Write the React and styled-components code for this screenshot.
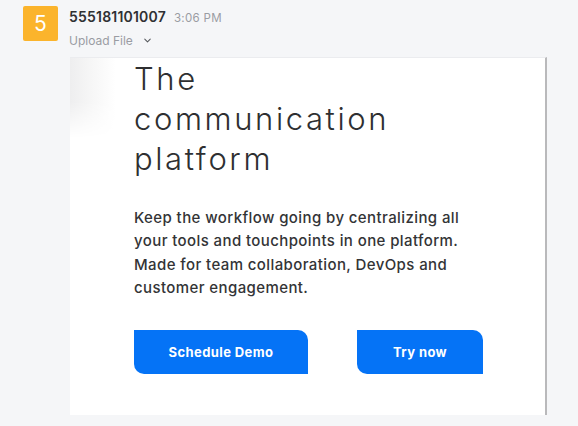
import React from "react";
import styled, { createGlobalStyle } from "styled-components";
import { ChevronDown } from "lucide-react";

const GlobalStyle = createGlobalStyle`
  html, body {
    margin: 0;
    padding: 0;
    background: #f5f6f8;
    font-family: Inter, "Noto Sans", sans-serif;
  }
`;

const MessageRow = styled.div`
  display: flex;
  align-items: flex-start;
  gap: 11px;
  padding: 6px 0 0 23px;
  width: 578px;
  height: 426px;
  box-sizing: border-box;
  overflow: hidden;
`;

const Avatar = styled.div`
  width: 35px;
  height: 35px;
  flex: none;
  border-radius: 2px;
  background: #fbb42c;
  color: #fff;
  font-size: 21px;
  display: flex;
  align-items: center;
  justify-content: center;
`;

const Body = styled.div`
  display: flex;
  flex-direction: column;
`;

const Header = styled.div`
  display: flex;
  align-items: baseline;
  gap: 8px;
  margin-top: 2px;

  .name {
    font-size: 14px;
    font-weight: 600;
    letter-spacing: 0.2px;
    color: #2f3033;
  }
  .time {
    font-size: 11.5px;
    letter-spacing: 0.3px;
    color: #9a9ca3;
  }
`;

const Upload = styled.button`
  display: flex;
  align-items: center;
  gap: 9px;
  margin-top: 8px;
  padding: 0;
  border: 0;
  background: none;
  font-family: inherit;
  font-size: 12px;
  color: #9a9ca3;
  cursor: pointer;
`;

const Preview = styled.div`
  position: relative;
  margin: 9px 0 0 1px;
  width: 477px;
  height: 358px;
  box-sizing: border-box;
  background: #fff;
  border-top: 1px solid #ebecef;
  border-right: 2px solid #b9b9bb;
  padding: 1px 0 0 64px;
  overflow: hidden;
`;

const EdgeShade = styled.div`
  position: absolute;
  left: 0;
  top: 0;
  width: 46px;
  height: 80px;
  background: linear-gradient(90deg, #eeeeef 0%, #f7f7f7 50%, #fff 100%);
  -webkit-mask-image: linear-gradient(180deg, #000 55%, transparent 100%);
`;

const Title = styled.h1`
  margin: 0;
  font-size: 31px;
  font-weight: 300;
  line-height: 40px;
  letter-spacing: 2.6px;
  color: #2e2f31;
`;

const Text = styled.p`
  margin: 27px 0 0;
  width: 360px;
  font-size: 15px;
  font-weight: 500;
  line-height: 23.3px;
  letter-spacing: 0.4px;
  color: #333436;
`;

const Actions = styled.div`
  display: flex;
  gap: 49px;
  margin-top: 31px;
`;

const CtaButton = styled.button`
  width: ${(p) => p.$w}px;
  height: 44px;
  border: 0;
  border-radius: 0 10px 0 10px;
  background: #0573f6;
  color: #fff;
  font-family: inherit;
  font-size: 13px;
  font-weight: 700;
  letter-spacing: 0.4px;
  cursor: pointer;
`;

export default function App() {
  return (
    <>
      <GlobalStyle />
      <MessageRow>
        <Avatar>5</Avatar>
        <Body>
          <Header>
            <span className="name">555181101007</span>
            <span className="time">3:06 PM</span>
          </Header>
          <Upload>
            Upload File <ChevronDown size={11} strokeWidth={2.2} color="#55575c" />
          </Upload>
          <Preview>
            <EdgeShade />
            <Title>
              The
              <br />
              communication
              <br />
              platform
            </Title>
            <Text>
              Keep the workflow going by centralizing all your tools and
              touchpoints in one platform. Made for team collaboration, DevOps
              and customer engagement.
            </Text>
            <Actions>
              <CtaButton $w={174}>Schedule Demo</CtaButton>
              <CtaButton $w={126}>Try now</CtaButton>
            </Actions>
          </Preview>
        </Body>
      </MessageRow>
    </>
  );
}
